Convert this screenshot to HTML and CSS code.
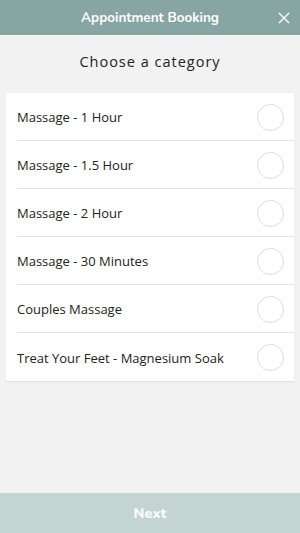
FILE: index.html
```html
<!DOCTYPE html>
<html lang="en">
<head>
    <meta charset="UTF-8">
    <meta name="viewport" content="width=device-width, initial-scale=1.0">
    <title>Appointment Booking</title>
    <link rel="stylesheet" href="styles.css">
</head>
<body>
    <div class="app">
        <header class="topbar">
            <span class="title">Appointment Booking</span>
            <span class="close">
                <svg width="12" height="12" viewBox="0 0 12 12"><path d="M1 1 L11 11 M11 1 L1 11" stroke="#fff" stroke-width="1.4" fill="none"/></svg>
            </span>
        </header>

        <main class="content">
            <h1 class="heading">Choose a category</h1>
            <ul class="list">
                <li class="item"><span>Massage - 1 Hour</span><span class="radio"></span></li>
                <li class="item"><span>Massage - 1.5 Hour</span><span class="radio"></span></li>
                <li class="item"><span>Massage - 2 Hour</span><span class="radio"></span></li>
                <li class="item"><span>Massage - 30 Minutes</span><span class="radio"></span></li>
                <li class="item"><span>Couples Massage</span><span class="radio"></span></li>
                <li class="item"><span>Treat Your Feet - Magnesium Soak</span><span class="radio"></span></li>
            </ul>
        </main>

        <footer class="footer">Next</footer>
    </div>
</body>
</html>
```

FILE: styles.css
```css
html, body { margin: 0; padding: 0; }
body { font-family: "Open Sans", "Liberation Sans", sans-serif; background: #f2f2f2; color: #222; }
.app { display: flex; flex-direction: column; height: 533px; }
.topbar { position: relative; height: 35px; background: #86a5a3; display: flex; align-items: center; justify-content: center; }
.title { font-family: "Nunito", Lato, sans-serif; font-weight: 700; font-size: 13.5px; color: #fff; }
.close { position: absolute; right: 10px; top: 12px; line-height: 0; }
.content { flex: 1; padding: 0 6px; }
.heading { margin: 17px 0 22px; text-align: center; font-weight: 400; font-size: 14.5px; letter-spacing: 1px; color: #222; }
.list { list-style: none; margin: 0; padding: 0; background: #fff; box-shadow: 0 1px 1px rgba(0,0,0,0.06); }
.item { height: 48px; margin-left: 11px; padding: 1px 10px 0 0; display: flex; align-items: center; justify-content: space-between; font-size: 13px; color: #222; border-bottom: 1px solid #e2e2e2; box-sizing: border-box; }
.item:last-child { border-bottom: none; }
.radio { width: 25px; height: 25px; border: 1px solid #dcdcdc; border-radius: 50%; }
.footer { height: 40px; background: #c4d4d3; color: #fafcfc; display: flex; align-items: center; justify-content: center; font-family: "Nunito", Lato, sans-serif; font-weight: 800; font-size: 14.5px; }
```
